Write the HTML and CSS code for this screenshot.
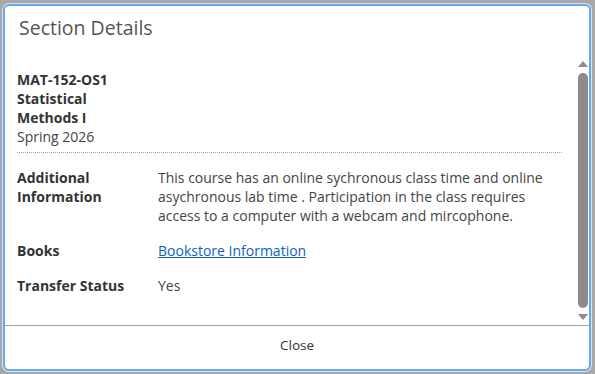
FILE: index.html
```html
<!DOCTYPE html>
<html lang="en">

<head>
    <meta charset="UTF-8">
    <meta name="viewport" content="width=device-width, initial-scale=1.0">
    <title>Section Details</title>
    <link rel="stylesheet" href="styles.css">
</head>

<body>
    <div class="modal">
        <div class="modal-header">
            <h2>Section Details</h2>
        </div>
        <div class="modal-body">
            <div class="details">
                <div class="course">
                    <div class="course-title">MAT-152-OS1<br>Statistical<br>Methods I</div>
                    <div class="course-term">Spring 2026</div>
                </div>
                <div class="info-row">
                    <div class="info-label">Additional Information</div>
                    <div class="info-value">This course has an online sychronous class time and online asychronous lab time . Participation in the class requires access to a computer with a webcam and mircophone.</div>
                </div>
                <div class="info-row">
                    <div class="info-label">Books</div>
                    <div class="info-value"><a href="#">Bookstore Information</a></div>
                </div>
                <div class="info-row">
                    <div class="info-label">Transfer Status</div>
                    <div class="info-value">Yes</div>
                </div>
            </div>
            <!-- 模拟滚动条 -->
            <div class="scrollbar">
                <div class="arrow-up"></div>
                <div class="thumb"></div>
                <div class="arrow-down"></div>
            </div>
        </div>
        <div class="modal-footer">
            <button class="close-btn">Close</button>
        </div>
    </div>
</body>

</html>
```

FILE: styles.css
```css
body {
    font-family: 'Open Sans', 'Liberation Sans', sans-serif;
    margin: 0;
    padding: 4px 4px 0 3px;
    background-color: #a8a8a8;
    height: 374px;
    box-sizing: border-box;
    overflow: hidden;
}

.modal {
    width: 588px;
    height: 367px;
    box-sizing: border-box;
    background: white;
    border: 2px solid #5eaaf6;
    border-radius: 6px;
    box-shadow: 0 0 0 1px #e2e2e2;
    display: flex;
    flex-direction: column;
}

.modal-header {
    height: 50px;
    box-sizing: border-box;
    padding: 8px 14px 0;
}

.modal-header h2 {
    margin: 0;
    font-size: 19.5px;
    font-weight: normal;
    line-height: 27px;
    color: #555;
}

.modal-body {
    height: 269px;
    display: flex;
}

.details {
    flex: 1;
    overflow: hidden;
    padding: 14px 13px 0 12px;
    font-size: 14px;
    line-height: 19px;
    color: #444;
}

.course {
    padding-bottom: 6px;
    border-bottom: 1px dotted #a0a0a0;
    margin-bottom: 15px;
}

.course-title {
    font-weight: bold;
    color: #333;
}

.info-row {
    display: flex;
    margin-bottom: 16px;
}

.info-label {
    width: 141px;
    flex-shrink: 0;
    font-weight: bold;
    color: #333;
    padding-right: 20px;
    box-sizing: border-box;
}

.info-value {
    flex: 1;
}

.info-value a {
    color: #0e62c0;
    text-decoration: underline;
}

.scrollbar {
    width: 14px;
    box-sizing: border-box;
    padding: 5px 1px 5px 3px;
    display: flex;
    flex-direction: column;
    align-items: center;
}

.arrow-up,
.arrow-down {
    width: 0;
    height: 0;
    border-left: 5px solid transparent;
    border-right: 5px solid transparent;
}

.arrow-up {
    border-bottom: 6px solid #8c8c8c;
}

.arrow-down {
    border-top: 6px solid #8c8c8c;
}

.thumb {
    flex: 1;
    width: 10px;
    margin: 6px 0;
    background-color: #8c8c8c;
    border-radius: 5px;
}

.modal-footer {
    flex: 1;
    border-top: 1px solid #a3a3a3;
    display: flex;
    justify-content: center;
    align-items: flex-start;
    padding-top: 10px;
}

.close-btn {
    font-family: inherit;
    font-size: 13.5px;
    line-height: 19px;
    color: #333;
    background: none;
    border: none;
    padding: 0 10px;
}
```
